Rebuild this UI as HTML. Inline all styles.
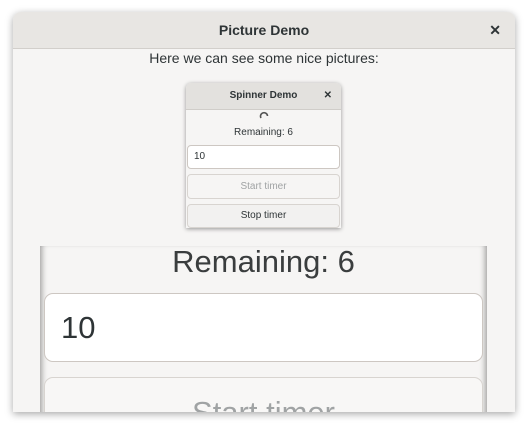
<!DOCTYPE html><html><head><style>
body{margin:0;width:528px;height:429px;background:#fff;font-family:"Liberation Sans",sans-serif;position:relative;overflow:hidden}
.win{position:absolute;left:13px;top:12px;width:502px;height:400px;background:#f6f5f4;box-shadow:0 2px 8px rgba(0,0,0,.35);border-radius:8px 8px 0 0;overflow:hidden}
.hb{height:36px;background:#e8e6e3;border-bottom:1px solid #d2cfcb;text-align:center;line-height:36px;font-weight:bold;font-size:14px;color:#2e3436}
.x{position:absolute;right:14px;top:0;font-size:14px;font-weight:bold}
.lab{position:absolute;top:38px;width:100%;text-align:center;font-size:14px;color:#2e3436}
.sw{position:absolute;left:173px;top:71px;width:155px;height:145px;background:#f6f5f4;box-shadow:0 1px 4px rgba(0,0,0,.4);border-radius:5px 5px 0 0;overflow:hidden;font-size:10px;color:#2e3436}
.shb{height:26px;background:#e3e1de;border-bottom:1px solid #d0cdc9;text-align:center;line-height:26px;font-weight:bold}
.e{position:absolute;background:#fff;border:1px solid #cdc7c2;border-radius:4px}
.b{position:absolute;background:#f6f5f4;border:1px solid #d8d4d0;border-radius:4px;text-align:center}
.pic{position:absolute;left:27px;top:234px;width:447px;height:170px;background:#f6f5f4;box-shadow:inset 6px 0 6px -4px rgba(0,0,0,.35),inset -6px 0 6px -4px rgba(0,0,0,.35);overflow:hidden;color:#2e3436}
</style></head><body>
<div class="win">
<div class="hb">Picture Demo<span class="x">✕</span></div>
<div class="lab">Here we can see some nice pictures:</div>
<div class="sw">
<div class="shb">Spinner Demo<span style="position:absolute;right:9px">✕</span></div>
<svg style="position:absolute;left:73px;top:28px" width="10" height="10" viewBox="0 0 10 10"><path d="M2 7A3.5 3.5 0 1 1 8.5 5" fill="none" stroke="#555" stroke-width="1.6"/></svg>
<div style="position:absolute;top:44px;width:100%;text-align:center">Remaining: 6</div>
<div class="e" style="left:1px;top:62px;width:151px;height:22px;line-height:22px;padding-left:0"><span style="padding-left:6px">10</span></div>
<div class="b" style="left:1px;top:91px;width:151px;height:23px;line-height:23px;color:#a0a3a4">Start timer</div>
<div class="b" style="left:1px;top:121px;width:151px;height:22px;line-height:22px;background:#f2f1f0">Stop timer</div>
</div>
<div class="pic">
<div style="position:absolute;top:-4px;width:100%;text-align:center;font-size:31px;line-height:40px;color:#3a3d3e">Remaining: 6</div>
<div class="e" style="left:4px;top:47px;width:437px;height:67px;border-radius:9px;font-size:31px;line-height:67px"><span style="padding-left:16px">10</span></div>
<div class="b" style="left:4px;top:131px;width:437px;height:67px;border-radius:9px;font-size:31px;line-height:70px;color:#a0a3a4;background:#f8f7f6">Start timer</div>
</div>
</div>
</body></html>
